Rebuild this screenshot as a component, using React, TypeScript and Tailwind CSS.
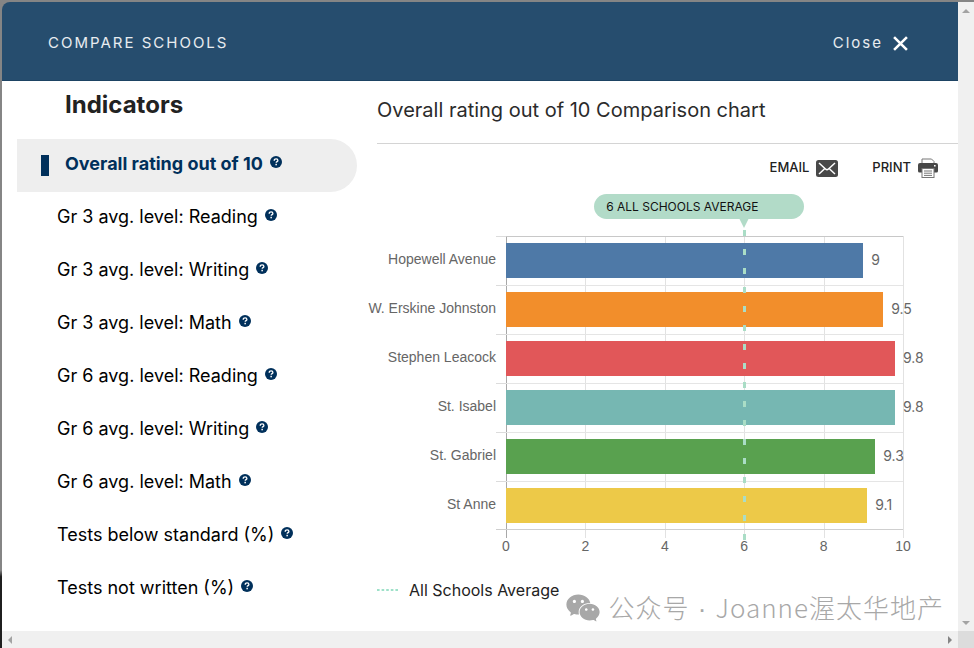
import { useState } from 'react';
import { AiFillWechat } from 'react-icons/ai';

const indicators = [
  'Overall rating out of 10',
  'Gr 3 avg. level: Reading',
  'Gr 3 avg. level: Writing',
  'Gr 3 avg. level: Math',
  'Gr 6 avg. level: Reading',
  'Gr 6 avg. level: Writing',
  'Gr 6 avg. level: Math',
  'Tests below standard (%)',
  'Tests not written (%)',
];

const schools = [
  { name: 'Hopewell Avenue', value: 9, color: 'bg-[#4e79a7]' },
  { name: 'W. Erskine Johnston', value: 9.5, color: 'bg-[#f28e2b]' },
  { name: 'Stephen Leacock', value: 9.8, color: 'bg-[#e15759]' },
  { name: 'St. Isabel', value: 9.8, color: 'bg-[#76b7b2]' },
  { name: 'St. Gabriel', value: 9.3, color: 'bg-[#59a14f]' },
  { name: 'St Anne', value: 9.1, color: 'bg-[#edc948]' },
];

const ticks = [0, 2, 4, 6, 8, 10];
const MAX = 10;

function HelpIcon() {
  return (
    <svg viewBox="0 0 12 12" className="size-3" aria-hidden="true">
      <circle cx="6" cy="6" r="6" fill="#00305b" />
      <path d="M4.2 4.7C4.2 3.5 5 2.9 6.1 2.9s1.8.6 1.8 1.5c0 1.2-1.7 1.2-1.7 2.4" fill="none" stroke="#fff" strokeWidth="1.3" />
      <rect x="5.4" y="7.8" width="1.5" height="1.5" fill="#fff" />
    </svg>
  );
}

function MailIcon() {
  return (
    <svg viewBox="0 0 22 17" className="h-[17px] w-[22px]" aria-hidden="true">
      <rect width="22" height="17" rx="2.5" fill="#484848" />
      <path d="M3 3l6.500 6c.9.8 2.100.8 3 0L19 3M3 14l5.400-5M19 14l-5.400-5" fill="none" stroke="#fff" strokeWidth="1.500" />
    </svg>
  );
}

function PrintIcon() {
  return (
    <svg viewBox="0 0 20 20" className="size-5" aria-hidden="true">
      <path d="M4 6V1h9.500L16 3.500V6" fill="#fff" stroke="#777" strokeWidth="1" />
      <path d="M2 5h16a2 2 0 0 1 2 2v6a1.500 1.500 0 0 1-1.500 1.500h-17A1.500 1.500 0 0 1 0 13V7a2 2 0 0 1 2-2z" fill="#484848" />
      <rect x="16" y="7" width="1.600" height="1.500" fill="#fff" />
      <rect x="4" y="10.500" width="12" height="9" fill="#fff" stroke="#777" strokeWidth="1" />
      <path d="M6 13h8M6 15.200h8M6 17.400h8" stroke="#777" strokeWidth="1" />
    </svg>
  );
}

function Header() {
  return (
    <header className="flex h-[79px] shrink-0 items-center justify-between rounded-tl-lg border-b border-[#1d4363] bg-[#264d6e] pt-1 pr-[50px] pl-[46px] text-[15px] text-white/90">
      <h1 className="tracking-[2px]">COMPARE SCHOOLS</h1>
      <button type="button" className="flex items-center gap-[10px] tracking-[2px]">
        Close
        <svg viewBox="0 0 14 14" className="size-[15px]" aria-hidden="true">
          <path d="M1 1l12 12M13 1L1 13" stroke="#fff" strokeWidth="2.400" />
        </svg>
      </button>
    </header>
  );
}

function Sidebar() {
  const [active, setActive] = useState(0);
  return (
    <nav className="w-[355px] shrink-0 pl-[15px] text-black" aria-label="Indicators">
      <h2 className="pt-2 pb-[18px] pl-12 text-2xl leading-8 font-bold text-[#222]">Indicators</h2>
      <ul>
        {indicators.map((name, i) => (
          <li
            key={name}
            className={
              i === active
                ? 'flex h-[53px] items-center rounded-r-full bg-[#eee] pl-6 text-lg font-bold text-[#00305b]'
                : 'flex h-[53px] items-center pl-10 text-lg'
            }
          >
            {i === active && <span className="mr-4 h-[21px] w-2 bg-[#00305b]" />}
            <button type="button" onClick={() => setActive(i)} className="pb-[3px] leading-6">
              {name}
            </button>
            <button type="button" aria-label={'About ' + name} className="mb-2 ml-[7px]">
              <HelpIcon />
            </button>
          </li>
        ))}
      </ul>
    </nav>
  );
}

function Chart() {
  return (
    <figure className="pr-[55px] pl-[149px]">
      <div className="relative h-14">
        <div className="absolute top-0 left-[60%]">
          <div className="absolute top-[14px] right-[-60px] h-[25px] w-[210px] rounded-full bg-[#b2dbc8] pl-3 text-xs leading-[25px] whitespace-nowrap text-[#111]">
            6 ALL SCHOOLS AVERAGE
          </div>
          <div className="absolute top-[38px] left-[-5px] border-x-[5px] border-t-[10px] border-x-transparent border-t-[#b2dbc8]" />
        </div>
      </div>

      <div className="relative">
        {ticks.map((t) => (
          <div
            key={t}
            className={
              t === 0
                ? 'absolute top-0 -bottom-2 w-px bg-[#a8a8a8]'
                : 'absolute top-0 -bottom-2 w-px bg-[#e2e2e2]'
            }
            style={{ left: (t / MAX) * 100 + '%' }}
          />
        ))}
        {schools.map((s, i) => (
          <div
            key={s.name}
            className={
              i === 0
                ? 'relative flex h-[49px] items-center border-t border-[#c8c8c8] pb-[2px]'
                : 'relative flex h-[49px] items-center border-t border-[#e5e5e5] pb-[2px]'
            }
          >
            <span className="absolute right-full mr-[10px] pb-[2px] font-['Liberation_Sans',Arial,sans-serif] text-sm whitespace-nowrap text-[#666]">
              {s.name}
            </span>
            <span className="absolute -top-px right-full h-px w-[10px] bg-[#dcdcdc]" />
            <span className={'h-[35px] shrink-0 ' + s.color} style={{ width: (s.value / MAX) * 100 + '%' }} />
            <span className="ml-2 text-sm text-[#666]">{s.value}</span>
          </div>
        ))}
        <div className="absolute right-0 bottom-0 left-[-10px] h-px bg-[#cfcfcf]" />
        <svg className="absolute -top-[6px] left-[60%] -ml-px h-[310px] w-[3px]" aria-hidden="true">
          <line x1="1.500" y1="0" x2="1.500" y2="310" stroke="#aaddc6" strokeWidth="3" strokeDasharray="6 13" />
        </svg>
      </div>

      <div className="relative mt-[6px] h-5 font-['Liberation_Sans',Arial,sans-serif] text-sm leading-5 text-[#666]">
        {ticks.map((t) => (
          <span key={t} className="absolute -translate-x-1/2" style={{ left: (t / MAX) * 100 + '%' }}>
            {t}
          </span>
        ))}
      </div>
    </figure>
  );
}

export default function App() {
  return (
    <div className="flex h-screen flex-col overflow-hidden bg-[linear-gradient(to_bottom,#858585_88%,#1f1f1f_89%)] pt-[2px] pl-[2px] font-[Inter,sans-serif]">
      <div className="flex min-h-0 flex-1">
        <div className="relative flex min-w-0 flex-1 flex-col">
          <Header />
          <div className="flex min-h-0 flex-1 bg-white">
            <Sidebar />
            <main className="min-w-0 flex-1">
              <div className="ml-5 border-b border-[#d4d4d4] pt-[15px] pb-[19px]">
                <h2 className="text-xl leading-7 whitespace-nowrap text-[#2b2b2b]">Overall rating out of 10 Comparison chart</h2>
              </div>
              <div className="flex justify-end gap-[34px] pt-3 pr-5 text-[13px] font-medium text-[#222]">
                <button type="button" className="flex h-6 items-center gap-[7px]">
                  EMAIL <MailIcon />
                </button>
                <button type="button" className="flex h-6 items-center gap-[7px]">
                  PRINT <PrintIcon />
                </button>
              </div>
              <Chart />
              <div className="mt-6 ml-5 flex h-5 items-center gap-[11px] text-base text-[#222]">
                <svg viewBox="0 0 21 2" className="h-[2px] w-[21px]" aria-hidden="true">
                  <path d="M0 1h21" stroke="#3fc393" strokeWidth="1.200" strokeDasharray="2.600 2" />
                </svg>
                All Schools Average
              </div>
            </main>
          </div>
          <div className="absolute right-[14px] bottom-1 flex items-center gap-[6px] font-['Noto_Sans_CJK_SC',sans-serif] text-[26px] leading-9 font-light whitespace-nowrap text-[#a8a8a8]">
            <AiFillWechat className="size-[38px]" />
            <span className="tracking-[1px]">
              公众号<span className="font-['Liberation_Sans',sans-serif]"> · </span>Joanne渥太华地产
            </span>
          </div>
        </div>
        <div className="flex w-4 shrink-0 flex-col items-center justify-between bg-[#f0f0f0] pt-[7px] pb-[6px]">
          <span className="border-x-4 border-b-4 border-x-transparent border-b-[#a3a3a3]" />
          <span className="border-x-4 border-t-4 border-x-transparent border-t-[#a3a3a3]" />
        </div>
      </div>
      <div className="flex h-[17px] shrink-0 bg-[#f0f0f0]">
        <div className="flex flex-1 items-center justify-between px-[6px]">
          <span className="border-y-4 border-r-4 border-y-transparent border-r-[#a3a3a3]" />
          <span className="border-y-4 border-l-4 border-y-transparent border-l-[#858585]" />
        </div>
        <div className="w-4 bg-[#dcdcdc]" />
      </div>
    </div>
  );
}
